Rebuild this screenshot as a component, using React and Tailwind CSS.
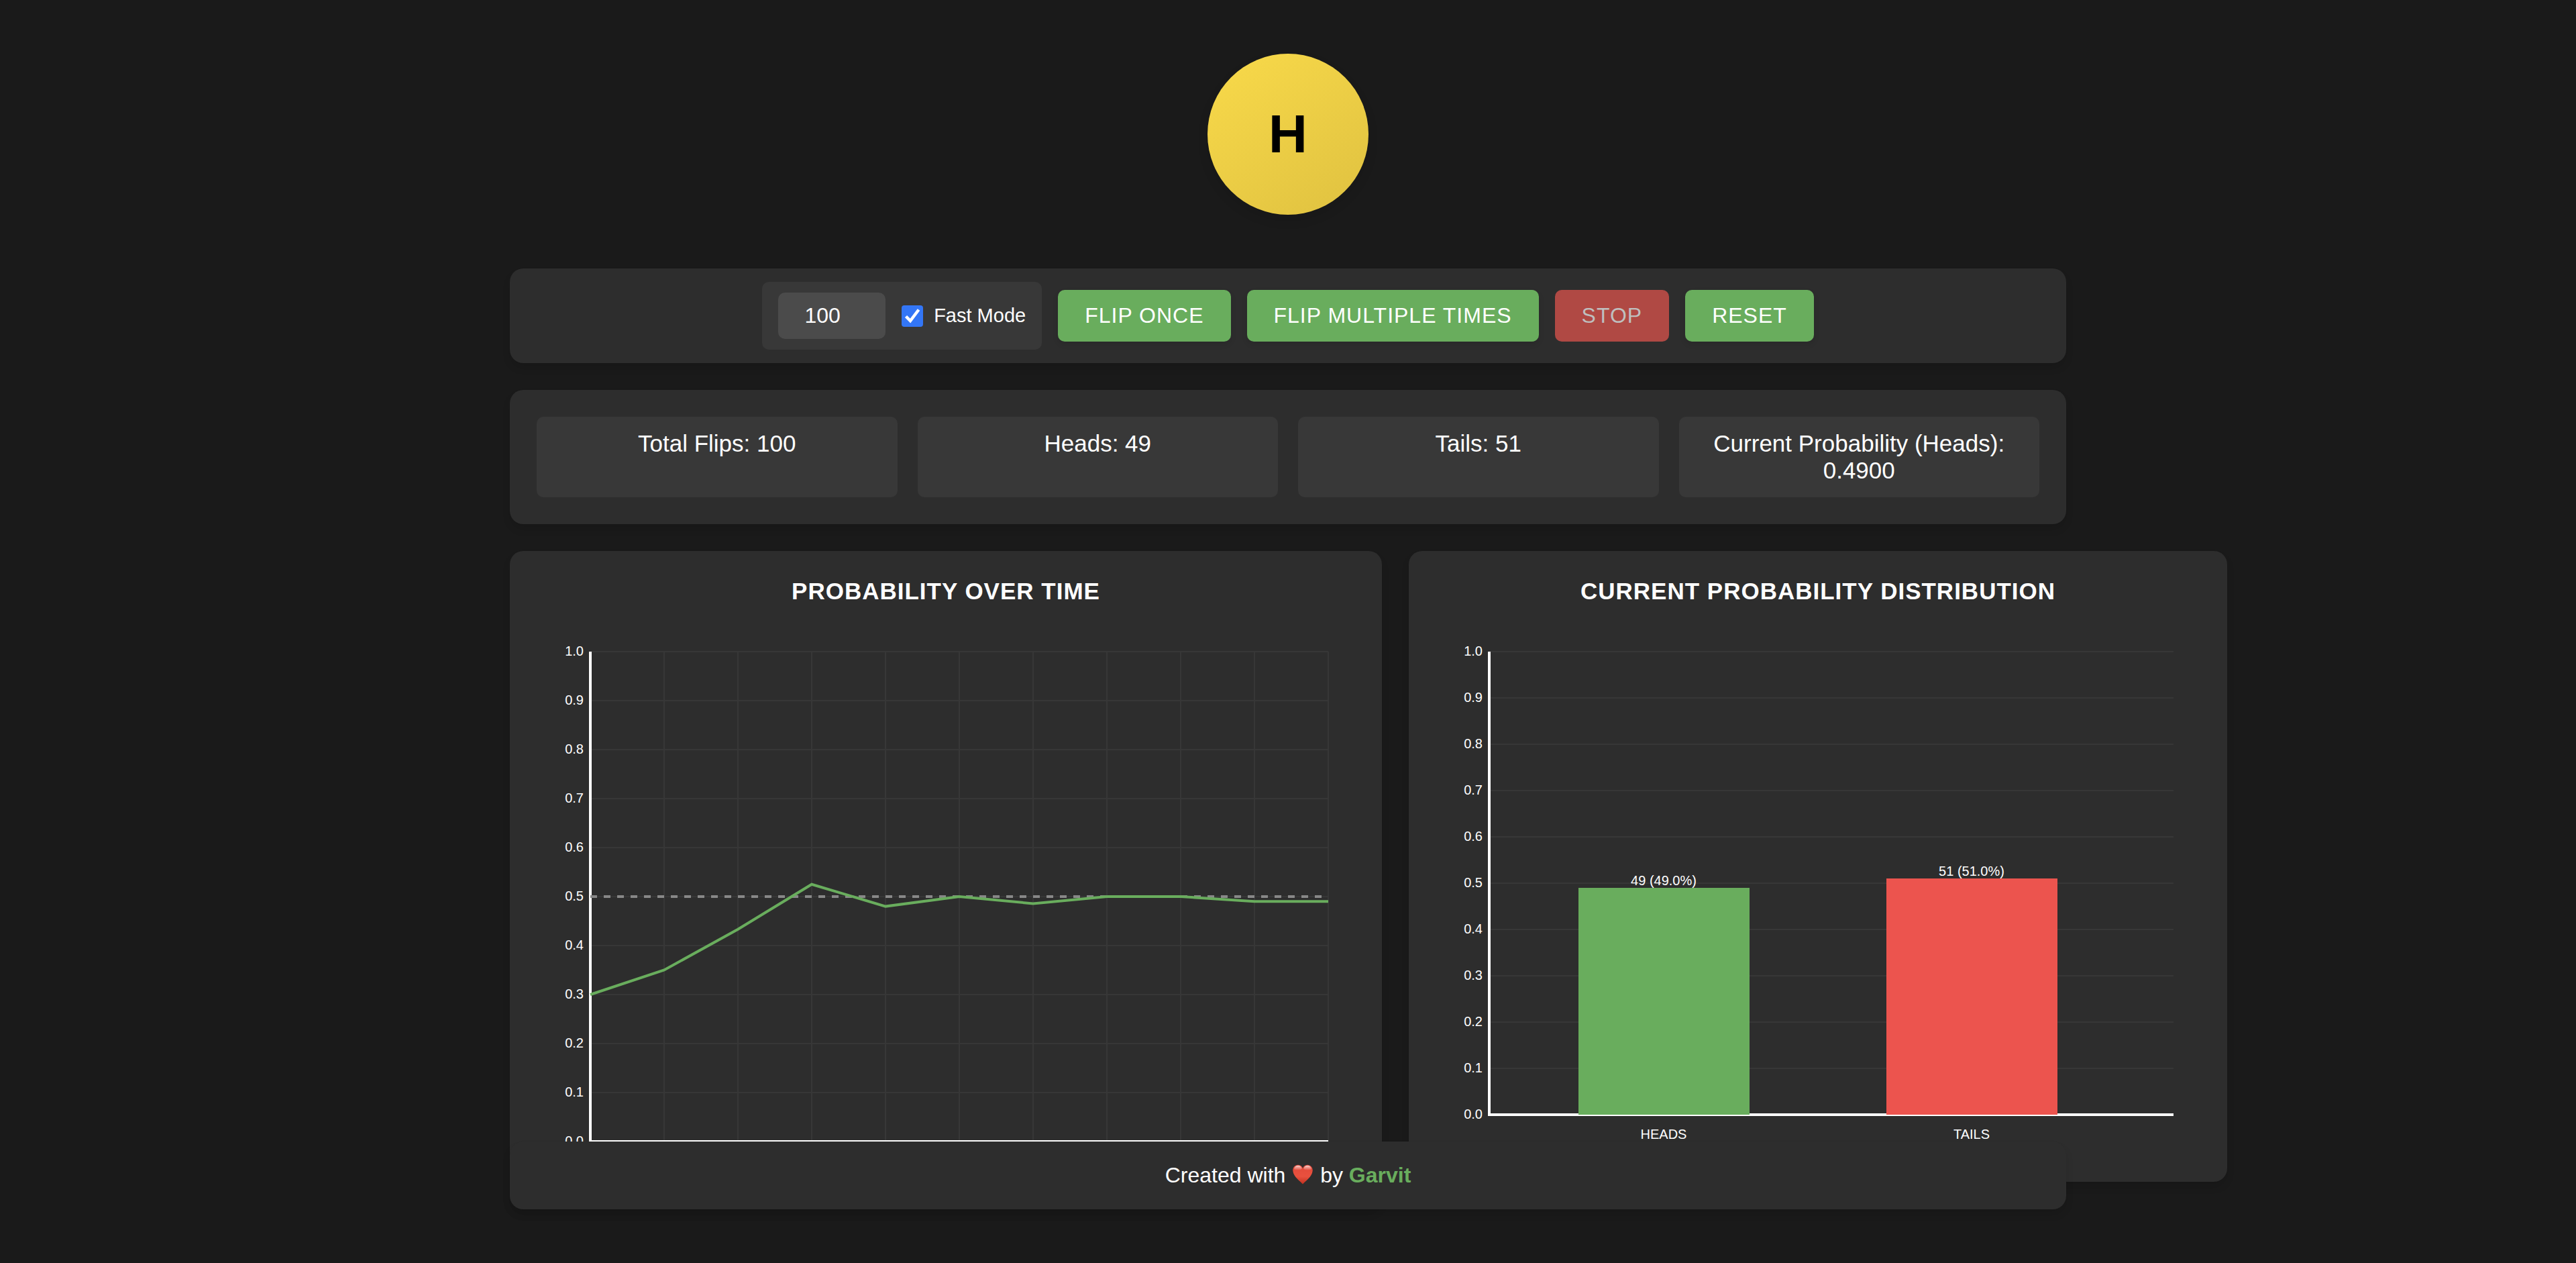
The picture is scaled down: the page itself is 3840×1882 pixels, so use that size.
import React, { useState } from "react";

const TICKS = [0, 1, 2, 3, 4, 5, 6, 7, 8, 9, 10];
const HISTORY = [0.3, 0.35, 0.4333, 0.525, 0.48, 0.5, 0.4857, 0.5, 0.5, 0.49, 0.49];
const STATS = [
  ["Total Flips", "100"],
  ["Heads", "49"],
  ["Tails", "51"],
  ["Current Probability (Heads)", "0.4900"],
];
const BARS = [
  { name: "HEADS", count: 49, x: 213, top: 392, fill: "#69ad5d" },
  { name: "TAILS", count: 51, x: 672, top: 378, fill: "#ec544e" },
];

function YAxis({ bottom, right }) {
  const step = (bottom - 40) / 10;
  return (
    <g>
      {TICKS.map((t) => (
        <g key={t}>
          <line x1="80" x2={right} y1={bottom - t * step} y2={bottom - t * step} stroke="#373737" strokeWidth="2" />
          <text x="70" y={bottom - t * step + 6} textAnchor="end" fill="#fff" fontSize="20">
            {(t / 10).toFixed(1)}
          </text>
        </g>
      ))}
    </g>
  );
}

function Axes({ bottom, right }) {
  return <path d={`M80 40V${bottom}H${right}`} fill="none" stroke="#fff" strokeWidth="4" />;
}

function LineChart() {
  const points = HISTORY.map((p, i) => `${80 + i * 110},${770 - p * 730}`).join(" ");
  return (
    <svg viewBox="0 0 1220 830" className="block h-auto w-full" role="img" aria-label="Probability over time">
      {TICKS.slice(1).map((t) => (
        <line key={t} x1={80 + t * 110} x2={80 + t * 110} y1="40" y2="770" stroke="#373737" strokeWidth="2" />
      ))}
      <YAxis bottom={770} right={1180} />
      <Axes bottom={770} right={1180} />
      <line x1="80" x2="1180" y1="405" y2="405" stroke="#888" strokeWidth="4" strokeDasharray="10 10" />
      <polyline points={points} fill="none" stroke="#69ad5d" strokeWidth="4" />
    </svg>
  );
}

function BarChart() {
  return (
    <svg viewBox="0 0 1140 790" className="block h-auto w-full" role="img" aria-label="Current probability distribution">
      <YAxis bottom={730} right={1100} />
      <Axes bottom={730} right={1100} />
      {BARS.map((b) => (
        <g key={b.name} textAnchor="middle" fontSize="20">
          <rect x={b.x} y={b.top} width="255" height={730 - b.top} fill={b.fill} />
          <text x={b.x + 127} y={b.top - 4} fill="#fff">{`${b.count} (${b.count}.0%)`}</text>
          <text x={b.x + 127} y="766" fill="#fff">{b.name}</text>
        </g>
      ))}
    </svg>
  );
}

function Panel({ className, children, as: Tag = "section" }) {
  return <Tag className={`rounded-[20px] bg-[#2d2d2d] shadow-[0_8px_12px_rgba(0,0,0,0.1)] ${className}`}>{children}</Tag>;
}

function ActionButton({ children }) {
  return (
    <button
      type="button"
      className="rounded-[10px] bg-[#69ad5d] px-10 py-5 leading-[37px] tracking-[1px] shadow-[0_4px_8px_rgba(0,0,0,0.1)]"
    >
      {children}
    </button>
  );
}

function ChartCard({ title, children }) {
  return (
    <Panel className="p-10">
      <h2 className="mb-[30px] text-center text-[35px] leading-10 font-bold tracking-[1px]">{title}</h2>
      {children}
    </Panel>
  );
}

function Heart() {
  return (
    <svg viewBox="0 0 30 30" className="mx-0.5 inline-block size-[30px] align-[-3px]" role="img" aria-label="love">
      <defs>
        <linearGradient id="heartFill" x1="0" y1="0" x2="0" y2="1">
          <stop offset="0" stopColor="#e2493a" />
          <stop offset="0.6" stopColor="#e9513e" />
          <stop offset="1" stopColor="#c0301f" />
        </linearGradient>
        <linearGradient id="heartShine" x1="0" y1="0" x2="0" y2="1">
          <stop offset="0" stopColor="#fff" stopOpacity="0.75" />
          <stop offset="1" stopColor="#fff" stopOpacity="0" />
        </linearGradient>
      </defs>
      <path
        d="M15 29.5C12 25.500 1 19 0.300 9.500C0 4.500 3.500 0.800 8 0.800C11.500 0.800 14 3 15 6C16 3 18.500 0.800 22 0.800C26.500 0.800 30 4.500 29.700 9.500C29 19 18 25.500 15 29.500Z"
        fill="url(#heartFill)"
      />
      <path
        d="M2 7C2.500 3.500 5 1.800 8 1.800C11 1.800 13 3.500 13.800 6.500C11 9.500 5 9.500 2 7Z M28 7C27.500 3.500 25 1.800 22 1.800C19 1.800 17 3.500 16.200 6.500C19 9.500 25 9.500 28 7Z"
        fill="url(#heartShine)"
      />
    </svg>
  );
}

export default function App() {
  const [count, setCount] = useState("100");
  const [fast, setFast] = useState(true);

  return (
    <div className="h-screen bg-[#1a1a1a] font-['Liberation_Sans',Arial,sans-serif] text-[32px] text-white">
      <div className="mx-auto flex h-full w-full max-w-[2400px] flex-col gap-10 px-10 py-20">
        <div className="mb-10 flex size-60 shrink-0 items-center justify-center self-center rounded-full bg-linear-[145deg,#f9da4a,#dfc140] text-[80px] leading-none font-bold text-black shadow-[0_8px_16px_rgba(0,0,0,0.1)]">
          H
        </div>

        <Panel className="flex flex-wrap items-center justify-center gap-6 p-5">
          <div className="flex items-center gap-6 rounded-[10px] bg-[#383838] px-6 py-4">
            <input
              type="number"
              aria-label="Number of flips"
              value={count}
              onChange={(e) => setCount(e.target.value)}
              className="w-40 [appearance:textfield] rounded-[10px] bg-[#4b4b4b] py-4 pr-7 text-center leading-[37px] [&::-webkit-inner-spin-button]:appearance-none"
            />
            <label className="flex items-center gap-4 text-[29px] leading-[37px]">
              <span className="grid size-8 *:col-start-1 *:row-start-1">
                <input
                  type="checkbox"
                  checked={fast}
                  onChange={(e) => setFast(e.target.checked)}
                  className="size-8 appearance-none rounded-sm bg-[#4b4b4b] checked:bg-[#3376f6]"
                />
                {fast && (
                  <svg viewBox="0 0 32 32" className="pointer-events-none size-8" aria-hidden="true">
                    <path d="M6.500 16.500L13 23L25.500 6.500" fill="none" stroke="#fff" strokeWidth="4.500" />
                  </svg>
                )}
              </span>
              Fast Mode
            </label>
          </div>
          <ActionButton>FLIP ONCE</ActionButton>
          <ActionButton>FLIP MULTIPLE TIMES</ActionButton>
          <button type="button" disabled className="rounded-[10px] bg-[#b04944] px-10 py-5 leading-[37px] tracking-[1px] text-[#bfbfbf]">
            STOP
          </button>
          <ActionButton>RESET</ActionButton>
        </Panel>

        <Panel className="grid grid-cols-4 gap-[30px] p-10">
          {STATS.map(([label, value]) => (
            <div key={label} className="rounded-[10px] bg-[#383838] p-5 text-center text-[35px] leading-10">
              {label}: {value}
            </div>
          ))}
        </Panel>

        <main className="grid min-h-0 w-[calc(100%+240px)] flex-1 grid-cols-[65fr_61fr] items-start gap-10">
          <ChartCard title="PROBABILITY OVER TIME">
            <LineChart />
          </ChartCard>
          <ChartCard title="CURRENT PROBABILITY DISTRIBUTION">
            <BarChart />
          </ChartCard>
        </main>

        <Panel as="footer" className="relative shrink-0 px-10 py-[30px] text-center leading-[41px]">
          Created with <Heart /> by{" "}
          <a href="#garvit" className="font-bold text-[#69ad5d]">
            Garvit
          </a>
        </Panel>
      </div>
    </div>
  );
}
